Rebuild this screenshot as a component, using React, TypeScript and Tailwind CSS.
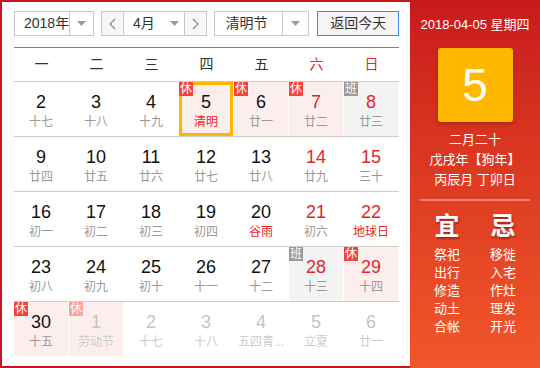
import React from "react";

type Day = {
  n: number;
  lunar: string;
  red?: boolean;
  lunarRed?: boolean;
  tag?: "xiu" | "ban";
  dim?: boolean;
  today?: boolean;
};

const weeks: Day[][] = [
  [
    { n: 2, lunar: "十七" },
    { n: 3, lunar: "十八" },
    { n: 4, lunar: "十九" },
    { n: 5, lunar: "清明", lunarRed: true, tag: "xiu", today: true },
    { n: 6, lunar: "廿一", tag: "xiu" },
    { n: 7, lunar: "廿二", tag: "xiu", red: true },
    { n: 8, lunar: "廿三", tag: "ban", red: true },
  ],
  [
    { n: 9, lunar: "廿四" },
    { n: 10, lunar: "廿五" },
    { n: 11, lunar: "廿六" },
    { n: 12, lunar: "廿七" },
    { n: 13, lunar: "廿八" },
    { n: 14, lunar: "廿九", red: true },
    { n: 15, lunar: "三十", red: true },
  ],
  [
    { n: 16, lunar: "初一" },
    { n: 17, lunar: "初二" },
    { n: 18, lunar: "初三" },
    { n: 19, lunar: "初四" },
    { n: 20, lunar: "谷雨", lunarRed: true },
    { n: 21, lunar: "初六", red: true },
    { n: 22, lunar: "地球日", red: true, lunarRed: true },
  ],
  [
    { n: 23, lunar: "初八" },
    { n: 24, lunar: "初九" },
    { n: 25, lunar: "初十" },
    { n: 26, lunar: "十一" },
    { n: 27, lunar: "十二" },
    { n: 28, lunar: "十三", tag: "ban", red: true },
    { n: 29, lunar: "十四", tag: "xiu", red: true },
  ],
  [
    { n: 30, lunar: "十五", tag: "xiu" },
    { n: 1, lunar: "劳动节", tag: "xiu", dim: true },
    { n: 2, lunar: "十七", dim: true },
    { n: 3, lunar: "十八", dim: true },
    { n: 4, lunar: "五四青...", dim: true },
    { n: 5, lunar: "立夏", dim: true },
    { n: 6, lunar: "廿一", dim: true },
  ],
];

const yi = ["祭祀", "出行", "修造", "动土", "合帐"];
const ji = ["移徙", "入宅", "作灶", "理发", "开光"];

function Caret() {
  return (
    <svg width="9" height="5" viewBox="0 0 9 5">
      <polygon points="0,0 9,0 4.5,5" fill="#9a9a9a" />
    </svg>
  );
}

function Chevron({ dir }: { dir: "l" | "r" }) {
  return (
    <svg width="7" height="12" viewBox="0 0 7 12">
      <polyline
        points={dir === "l" ? "6,1 1,6 6,11" : "1,1 6,6 1,11"}
        fill="none"
        stroke="#888"
        strokeWidth="1.2"
      />
    </svg>
  );
}

function Cell({ d }: { d: Day }) {
  let bg = "";
  if (d.tag === "xiu") bg = "bg-[#fdeeee]";
  if (d.tag === "ban") bg = "bg-[#f3f3f3]";
  const numColor = d.dim ? "text-[#c4c4c4]" : d.red ? "text-[#e3262b]" : "text-[#111]";
  const lunarColor = d.dim ? "text-[#cccccc]" : d.lunarRed ? "text-[#e3262b]" : "text-[#999]";
  const badgeBg =
    d.tag === "ban" ? "bg-[#999]" : d.dim ? "bg-[#f8a49c]" : "bg-[#f4433a]";

  return (
    <div className="border-r border-white h-full">
      <div
        className={`relative h-full flex flex-col items-center ${bg} ${
          d.today ? "border-[3px] border-[#ffb400] bg-[#fdeeee] pt-[7px]" : "pt-[10px]"
        }`}
      >
        {d.tag && (
          <span
            className={`absolute ${d.today ? "-left-[3px] -top-[3px]" : "left-0 top-0"} w-[14px] h-[14px] ${badgeBg} text-white text-[12px] leading-[14px] text-center`}
          >
            {d.tag === "xiu" ? "休" : "班"}
          </span>
        )}
        <span className={`text-[18px] leading-[20px] ${numColor}`}>{d.n}</span>
        <span className={`mt-[2px] text-[12px] leading-[16px] whitespace-nowrap ${lunarColor}`}>
          {d.lunar}
        </span>
      </div>
    </div>
  );
}

export default function App() {
  return (
    <div
      className="flex w-[540px] h-[368px] bg-white"
      style={{ fontFamily: '"Liberation Sans", "Noto Sans CJK SC", sans-serif' }}
    >
      {/* Left: calendar */}
      <div className="w-[410px] border-l-2 border-t-2 border-b-2 border-[#c8161d] pl-[12px] pr-[11px]">
        {/* Controls */}
        <div className="mt-[9px] h-[25px] flex text-[14px] text-[#333] whitespace-nowrap">
          <div className="w-[80px] flex border border-[#c8c8c8]">
            <div className="flex-1 pl-[9px] leading-[23px]">2018年</div>
            <div className="w-[24px] border-l border-[#c8c8c8] flex items-center justify-center">
              <Caret />
            </div>
          </div>
          <div className="ml-[7px] w-[106px] flex border border-[#c8c8c8]">
            <div className="w-[22px] border-r border-[#c8c8c8] flex items-center justify-center bg-[#f7f7f7]">
              <Chevron dir="l" />
            </div>
            <div className="flex-1 pl-[9px] leading-[23px]">4月</div>
            <div className="w-[14px] flex items-center">
              <Caret />
            </div>
            <div className="w-[22px] border-l border-[#c8c8c8] flex items-center justify-center bg-[#f7f7f7]">
              <Chevron dir="r" />
            </div>
          </div>
          <div className="ml-[7px] w-[96px] flex border border-[#c8c8c8]">
            <div className="flex-1 pl-[11px] leading-[23px]">清明节</div>
            <div className="w-[26px] border-l border-[#c8c8c8] flex items-center justify-center">
              <Caret />
            </div>
          </div>
          <div className="ml-[8px] w-[82px] border border-[#3b8cf0] bg-[#f5f5f5] flex items-center justify-center">
            返回今天
          </div>
        </div>

        <div className="mt-[11px] h-[1px] bg-[#e6574a]" />

        {/* Weekdays */}
        <div className="grid grid-cols-7 h-[34px] border-b border-[#cccccc] text-[14px]">
          {["一", "二", "三", "四", "五", "六", "日"].map((w, i) => (
            <div
              key={w}
              className={`flex items-center justify-center ${i >= 5 ? "text-[#e3262b]" : "text-[#333]"}`}
            >
              {w}
            </div>
          ))}
        </div>

        {/* Days */}
        {weeks.map((row, ri) => (
          <div
            key={ri}
            className={`grid grid-cols-7 ${ri < weeks.length - 1 ? "h-[55px] border-b border-[#cccccc]" : "h-[54px]"}`}
          >
            {row.map((d, ci) => (
              <Cell key={ci} d={d} />
            ))}
          </div>
        ))}
      </div>

      {/* Right: today panel */}
      <div className="w-[130px] h-full bg-linear-to-b from-[#c9191b] to-[#f2562a] text-white flex flex-col items-center">
        <div className="mt-[16px] text-[13px] leading-[18px]">2018-04-05 星期四</div>
        <div className="mt-[14px] w-[75px] h-[74px] rounded-[3px] bg-[#ffb800] shadow-[0_2px_4px_rgba(120,20,0,0.45)] flex items-center justify-center text-[46px] leading-none">
          5
        </div>
        <div className="mt-[8px] text-[13px] leading-[20px] text-center">
          <div>二月二十</div>
          <div>戊戌年【狗年】</div>
          <div>丙辰月 丁卯日</div>
        </div>
        <div className="mt-[9px] w-[110px] h-[2px] bg-[#ec8476]" />
        <div className="mt-[10px] grid grid-cols-[56px_56px] text-center">
          <div className="text-[25px] leading-[30px] font-bold [text-shadow:1px_2px_2px_rgba(90,0,0,0.45)]">宜</div>
          <div className="text-[25px] leading-[30px] font-bold [text-shadow:1px_2px_2px_rgba(90,0,0,0.45)]">忌</div>
          <div className="mt-[5px] text-[13px] leading-[18px]">
            {yi.map((t) => (
              <div key={t}>{t}</div>
            ))}
          </div>
          <div className="mt-[5px] text-[13px] leading-[18px]">
            {ji.map((t) => (
              <div key={t}>{t}</div>
            ))}
          </div>
        </div>
      </div>
    </div>
  );
}
